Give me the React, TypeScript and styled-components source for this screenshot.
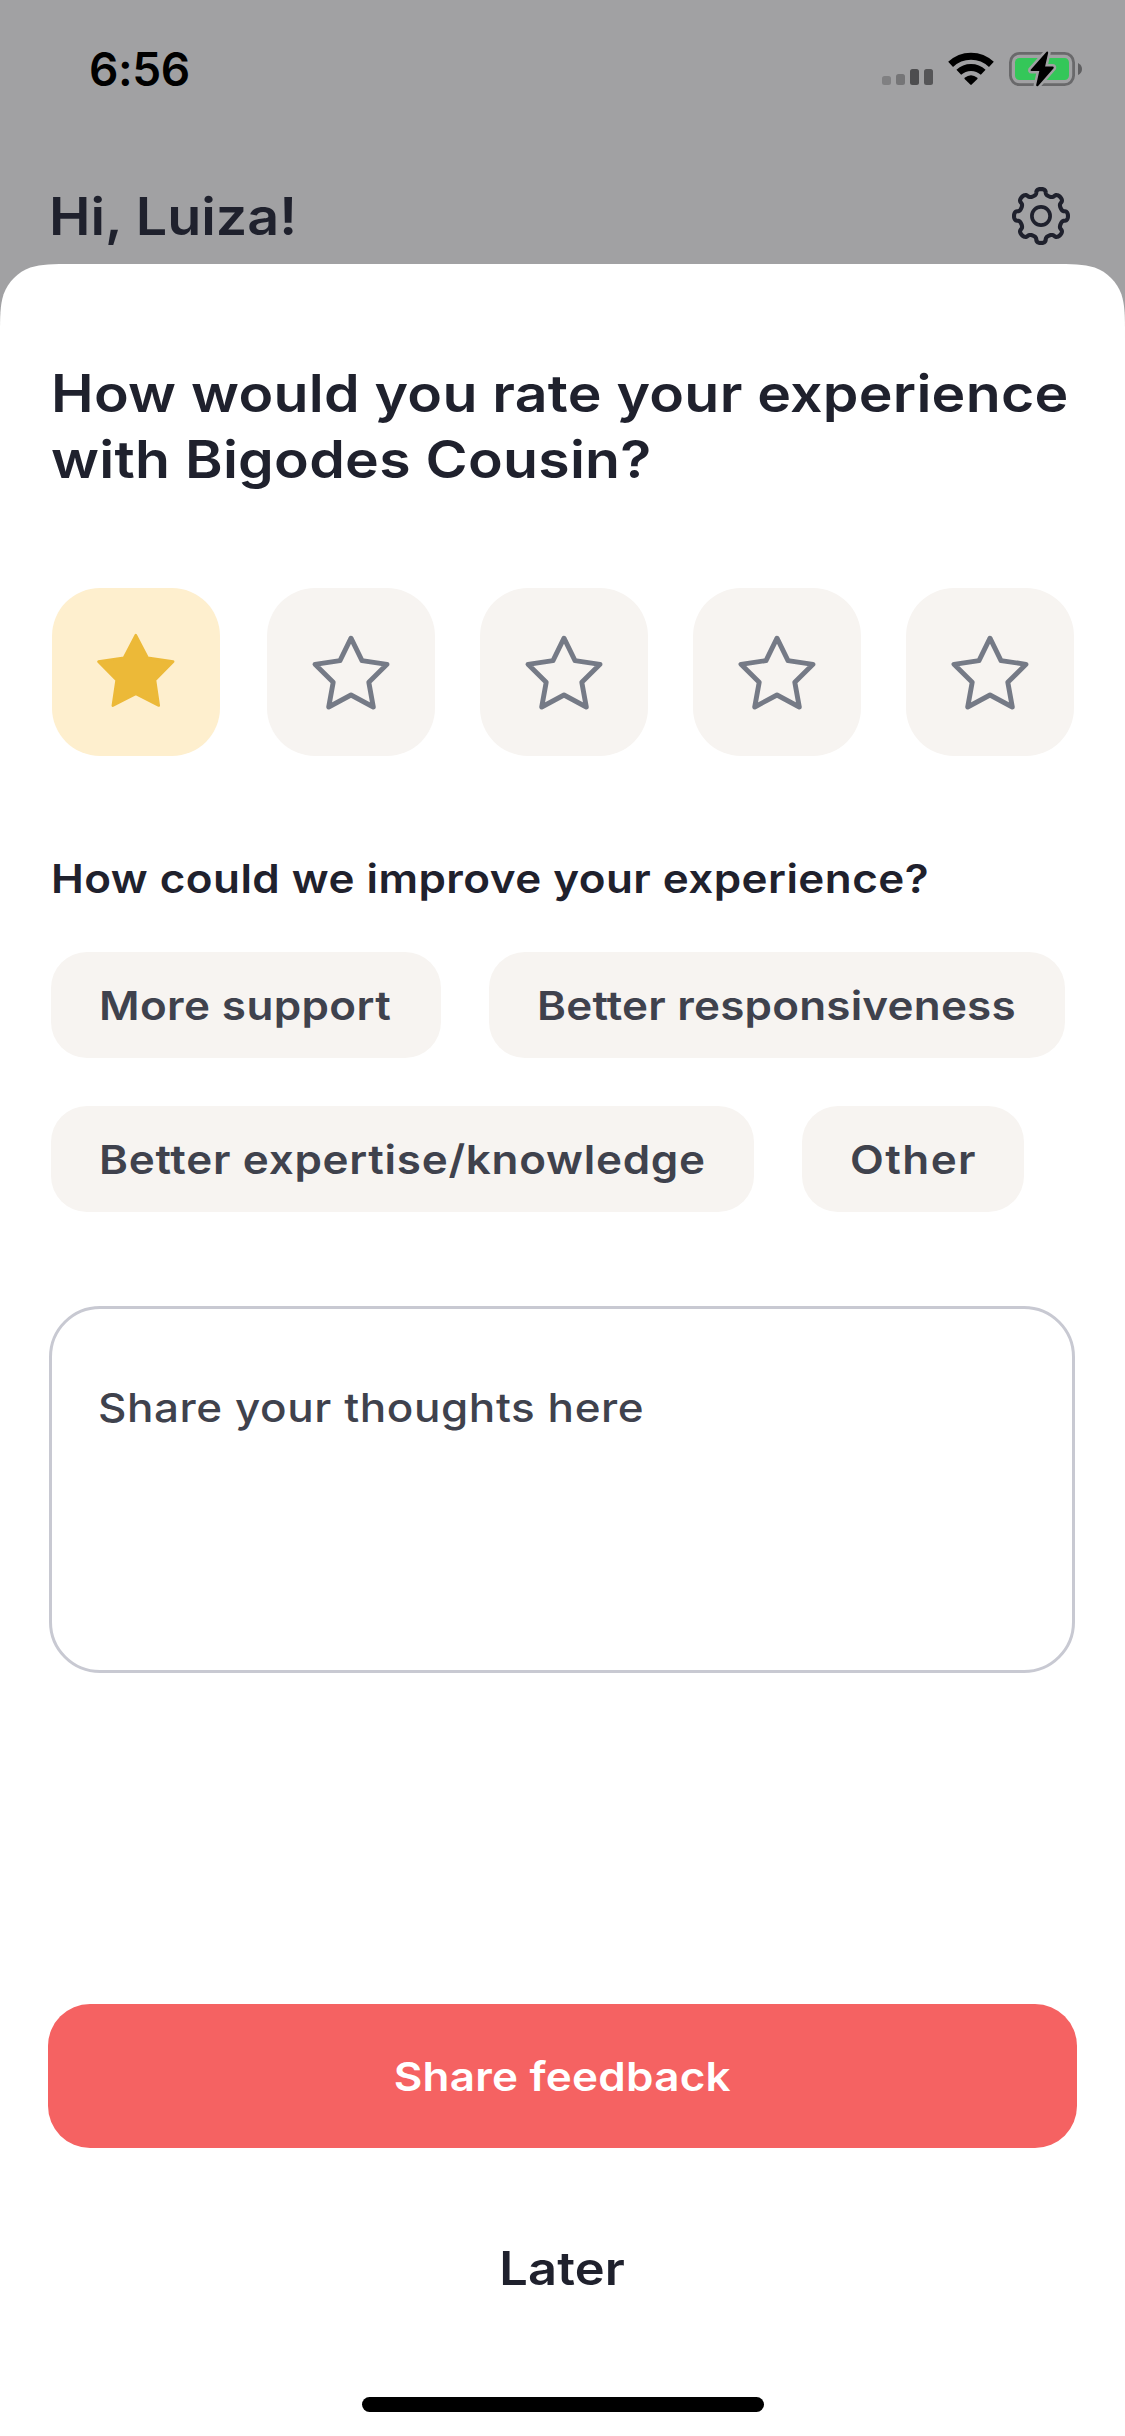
import React from "react";
import styled, { createGlobalStyle } from "styled-components";

const INK = "#1f212d";
const SLATE = "#3f424d";
const BACKDROP = "#a1a1a3";
const TILE = "#f7f4f1";

const GlobalStyle = createGlobalStyle`
  * { box-sizing: border-box; }
  body {
    margin: 0;
    background: ${BACKDROP};
    font-family: Inter, "Liberation Sans", sans-serif;
    color: ${INK};
  }
`;

const Screen = styled.div`
  width: 1125px;
  height: 2436px;
  display: flex;
  flex-direction: column;
  background: ${BACKDROP};
  overflow: hidden;
`;

/* Extended-width lettering */
const Wide = styled.span<{ $stretch?: number; $tracking?: number; $centered?: boolean }>`
  display: inline-block;
  transform: scaleX(${(p) => p.$stretch ?? 1.1});
  transform-origin: ${(p) => (p.$centered ? "center" : "left")} center;
  letter-spacing: ${(p) => p.$tracking ?? 0}px;
  white-space: nowrap;
`;

const StatusBar = styled.div`
  height: 138px;
  flex: none;
  display: flex;
  align-items: center;
  justify-content: space-between;
  padding: 0 41px 0 89px;
`;

const Time = styled.span`
  font-size: 46px;
  line-height: 56px;
  font-weight: 600;
  letter-spacing: -0.4px;
  color: #000;
`;

const StatusIcons = styled.div`
  display: flex;
  align-items: center;
`;

const SignalIcon = styled.svg`
  width: 66px;
  height: 36px;
`;

const WifiIcon = styled.svg`
  width: 61px;
  height: 36px;
`;

const BatteryIcon = styled.svg`
  width: 75px;
  height: 36px;
`;

const Header = styled.header`
  height: 126px;
  flex: none;
  display: flex;
  align-items: center;
  justify-content: space-between;
  padding: 30px 54px 0 49px;
`;

const Greeting = styled.h1`
  margin: 0;
  padding-top: 1px;
  font-size: 52px;
  line-height: 64px;
  font-weight: 600;
`;

const GearSvg = styled.svg`
  width: 60px;
  height: 60px;
`;

const Sheet = styled.main`
  flex: 1;
  display: flex;
  flex-direction: column;
  padding: 97px 48px 24px;
  background: #fff;
  clip-path: path("M0 73.4 C0 52.2 0 41.7 3.6 30.3 C8.1 17.9 17.9 8.1 30.3 3.6 C41.7 0 52.2 0 73.4 0 L1051.6 0 C1072.8 0 1083.3 0 1094.7 3.6 C1107.1 8.1 1116.9 17.9 1121.4 30.3 C1125 41.7 1125 52.2 1125 73.4 L1125 2200 L0 2200 Z");
`;

const Title = styled.h2`
  margin: 0 0 95px;
  padding-left: 3px;
  font-size: 52px;
  line-height: 66px;
  font-weight: 600;
`;

const Stars = styled.div`
  display: flex;
  gap: 45px;
  padding-left: 4px;
`;

const StarTile = styled.button<{ $active?: boolean }>`
  width: 168px;
  height: 168px;
  flex: none;
  padding: 0;
  border: 0;
  border-radius: 48px;
  margin-right: ${(p) => (p.$active ? "2px" : "0")};
  background: ${(p) => (p.$active ? "#feefce" : TILE)};
`;

const StarSvg = styled.svg`
  display: block;
  width: 168px;
  height: 168px;
`;

const Question = styled.h3`
  margin: 98px 0 49px;
  padding-left: 3px;
  font-size: 40px;
  line-height: 49px;
  font-weight: 600;
`;

const Chips = styled.div`
  display: flex;
  flex-wrap: wrap;
  gap: 48px;
  padding-left: 3px;
`;

const Chip = styled.button<{ $width: number }>`
  width: ${(p) => p.$width}px;
  height: 106px;
  padding: 1px 0 0 48px;
  border: 0;
  border-radius: 36px;
  background: ${TILE};
  color: ${SLATE};
  font: 600 40px/48px Inter, "Liberation Sans", sans-serif;
  text-align: left;
`;

const Thoughts = styled.div`
  height: 367px;
  flex: none;
  margin: 94px 2px 0 1px;
  padding: 75px 46px;
  border: 3px solid #c8c9d2;
  border-radius: 51px;
  color: ${SLATE};
  font-size: 40px;
  line-height: 48px;
  font-weight: 500;
`;

const Actions = styled.div`
  margin-top: auto;
  display: flex;
  flex-direction: column;
  align-items: center;
`;

const Primary = styled.button`
  width: 1029px;
  height: 144px;
  padding: 1px 0 0;
  border: 0;
  border-radius: 42px;
  background: #f56262;
  color: #fff;
  font: 600 40px/48px Inter, "Liberation Sans", sans-serif;
`;

const Secondary = styled.button`
  margin-top: 92px;
  padding: 0;
  border: 0;
  background: none;
  color: ${INK};
  font: 600 46px/56px Inter, "Liberation Sans", sans-serif;
`;

const HomeIndicator = styled.div`
  width: 402px;
  height: 15px;
  margin-top: 101px;
  border-radius: 8px;
  background: #000;
`;

const gearPath = (() => {
  const steps = 240;
  const points: string[] = [];
  for (let i = 0; i < steps; i++) {
    const t = (i / steps) * Math.PI * 2;
    const r = 24.1 + 2.9 * Math.cos(8 * t);
    const a = t + 0.045 * Math.sin(16 * t);
    points.push(`${(30 + r * Math.sin(a)).toFixed(2)} ${(30 - r * Math.cos(a)).toFixed(2)}`);
  }
  return `M${points.join("L")}Z`;
})();

const BOLT = "M37.3 0.6 L21.4 18.5 Q20.9 19.8 22.2 19.9 L30 19.9 L26.8 34 Q27.3 35.6 28.8 34.7 L44.3 17 Q44.8 15.4 43.4 15.2 L35.8 15.2 L38.9 1.6 Q38.6 -0.4 37.3 0.6 Z";

function Signal() {
  return (
    <SignalIcon viewBox="882 51 66 36">
      <rect x="882" y="76" width="9" height="9" rx="2.5" fill="#808082" />
      <rect x="896" y="74" width="9" height="11" rx="2.5" fill="#757577" />
      <rect x="910" y="69" width="9" height="16" rx="2.5" fill="#4d4d4f" />
      <rect x="924" y="69" width="9" height="16" rx="2.5" fill="#555557" />
    </SignalIcon>
  );
}

function Wifi() {
  return (
    <WifiIcon viewBox="948 51 61 36">
      <g fill="none" stroke="#000" strokeWidth="7">
        <path d="M950.6 64.4 A29.5 29.5 0 0 1 991.4 64.4" />
        <path d="M958.8 72.3 A18 18 0 0 1 983.2 72.3" />
      </g>
      <path d="M964.6 77.8 Q971 72.6 977.4 77.8 Q977.9 78.4 977.4 79 L971.7 84.6 Q971 85.2 970.3 84.6 L964.6 79 Q964.1 78.4 964.6 77.8 Z" fill="#000" />
    </WifiIcon>
  );
}

function Battery() {
  return (
    <BatteryIcon viewBox="1009 51 75 36">
      <rect x="1010.4" y="53.4" width="63.2" height="31.2" rx="9" fill="none" stroke="#69696b" strokeWidth="2.8" />
      <rect x="1015" y="58" width="54" height="22" rx="4.5" fill="#34c759" />
      <path d="M1078 63 Q1082 65 1082 69 Q1082 73 1078 75 Z" fill="#5f5f61" />
      <g transform="translate(1009.3 51.2)">
        <path d={BOLT} fill={BACKDROP} stroke={BACKDROP} strokeWidth="5" strokeLinejoin="round" />
        <path d={BOLT} fill="#000" />
      </g>
    </BatteryIcon>
  );
}

function Gear() {
  return (
    <GearSvg viewBox="0 0 60 60" fill="none" stroke={INK} strokeWidth="4.1" strokeLinejoin="round">
      <path d={gearPath} />
      <circle cx="30" cy="30" r="9.1" strokeWidth="3.7" />
    </GearSvg>
  );
}

function Star({ active }: { active: boolean }) {
  return (
    <StarTile $active={active} aria-label="star">
      <StarSvg viewBox="0 0 168 168" strokeLinejoin="round">
        {active ? (
          <path
            d="M83.8 47 L95.7 69.8 L121.2 73.6 L103 92 L106.8 117.6 L83.8 105.8 L60.8 117.6 L64.6 92 L46.4 73.6 L71.9 69.8 Z"
            fill="#ecb938"
            stroke="#ecb938"
            strokeWidth="2.5"
          />
        ) : (
          <path
            d="M84 50.2 L95 72.6 L120 76.3 L101.8 94.3 L106.3 119 L84 107 L61.7 119 L66.2 94.3 L48 76.3 L73 72.6 Z"
            fill="none"
            stroke="#757a86"
            strokeWidth="4.9"
          />
        )}
      </StarSvg>
    </StarTile>
  );
}

const options = [
  { label: "More support", width: 390, tracking: 0.34 },
  { label: "Better responsiveness", width: 576, tracking: 0.18 },
  { label: "Better expertise/knowledge", width: 703, tracking: 0.65 },
  { label: "Other", width: 222, tracking: 1.3 },
];

export default function App() {
  return (
    <Screen>
      <GlobalStyle />
      <StatusBar>
        <Time>6:56</Time>
        <StatusIcons>
          <Signal />
          <Wifi />
          <Battery />
        </StatusIcons>
      </StatusBar>
      <Header>
        <Greeting>
          <Wide $stretch={1.07}>Hi, Luiza!</Wide>
        </Greeting>
        <Gear />
      </Header>
      <Sheet>
        <Title>
          <Wide $tracking={0.22}>
            How would you rate your experience
            <br />
            with Bigodes Cousin?
          </Wide>
        </Title>
        <Stars>
          {[1, 2, 3, 4, 5].map((n) => (
            <Star key={n} active={n === 1} />
          ))}
        </Stars>
        <Question>
          <Wide $tracking={0.4}>How could we improve your experience?</Wide>
        </Question>
        <Chips>
          {options.map((o) => (
            <Chip key={o.label} $width={o.width}>
              <Wide $tracking={o.tracking}>{o.label}</Wide>
            </Chip>
          ))}
        </Chips>
        <Thoughts>
          <Wide $tracking={0.52}>Share your thoughts here</Wide>
        </Thoughts>
        <Actions>
          <Primary>
            <Wide $centered $tracking={0.22}>Share feedback</Wide>
          </Primary>
          <Secondary>
            <Wide $centered $tracking={0.1}>Later</Wide>
          </Secondary>
          <HomeIndicator />
        </Actions>
      </Sheet>
    </Screen>
  );
}
